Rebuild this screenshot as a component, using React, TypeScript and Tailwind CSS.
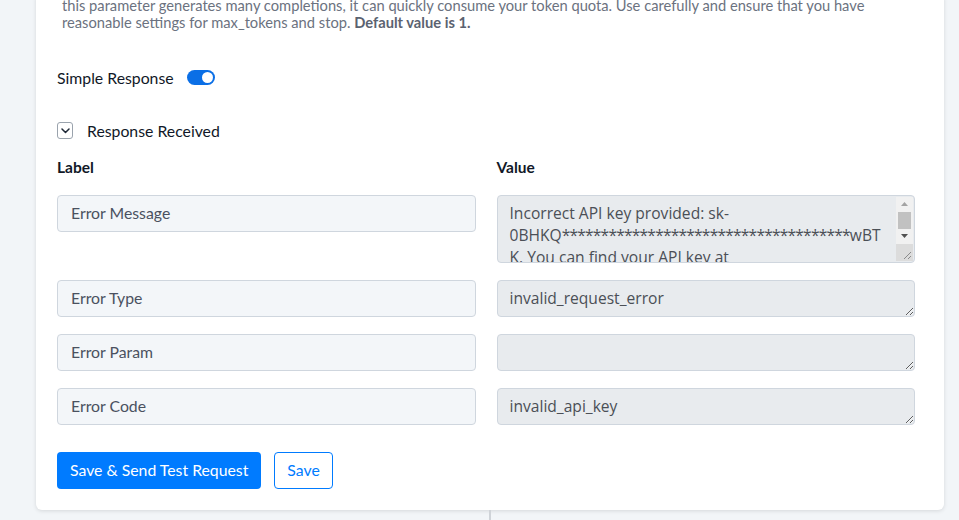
import React from "react";

const rows = [
  { label: "Error Message", value: "" },
  { label: "Error Type", value: "invalid_request_error" },
  { label: "Error Param", value: "" },
  { label: "Error Code", value: "invalid_api_key" },
];

const mask = "*".repeat(37);

function Toggle() {
  return (
    <span className="inline-flex h-[15px] w-[28px] items-center justify-end rounded-full bg-[#0b6fe6] px-[2px]">
      <span className="h-[11px] w-[11px] rounded-full bg-white" />
    </span>
  );
}

function Chevron() {
  return (
    <span className="flex h-[17px] w-[16px] items-center justify-center rounded-[3px] border border-[#9aa3ad] bg-white">
      <svg width="9" height="6" viewBox="0 0 9 6" fill="none">
        <path d="M1 1l3.5 3.5L8 1" stroke="#1f2937" strokeWidth="1.5" strokeLinecap="round" strokeLinejoin="round" />
      </svg>
    </span>
  );
}

// classic vertical scrollbar drawn over the right edge of the message box
function ScrollRail() {
  return (
    <div className="pointer-events-none absolute right-[1px] top-[1px] bottom-[1px] flex w-[17px] flex-col bg-[#f1f1f1]">
      <div className="flex h-[15px] items-center justify-center">
        <svg width="7" height="4" viewBox="0 0 7 4">
          <path d="M0 4L3.5 0L7 4z" fill="#a3a3a3" />
        </svg>
      </div>
      <div className="mx-[2px] h-[17px] bg-[#c1c1c1]" />
      <div className="flex h-[15px] items-center justify-center">
        <svg width="7" height="4" viewBox="0 0 7 4">
          <path d="M0 0L3.5 4L7 0z" fill="#505050" />
        </svg>
      </div>
      <div className="relative flex-1 bg-[#dcdcdc]">
        <svg className="absolute bottom-[1px] right-[1px]" width="9" height="9" viewBox="0 0 9 9">
          <path d="M8 1L1 8M8 5L5 8" stroke="#8a8a8a" strokeWidth="1" />
        </svg>
      </div>
    </div>
  );
}

function MessageBox() {
  return (
    <div className="relative h-[68px] overflow-hidden rounded-[4px] border border-[#cfd6de] bg-[#e8ebee]">
      <div className="pl-[12px] pr-[30px] pt-[6px] font-['Open_Sans',sans-serif] text-[15.6px] leading-[22px] text-[#4b4f56] whitespace-nowrap">
        <div>Incorrect API key provided: sk-</div>
        <div>
          0BHKQ<span className="tracking-[-0.8px]">{mask}</span>wBT
        </div>
        <div>K. You can find your API key at</div>
        <div>https://platform.openai.com/account/api-keys.</div>
      </div>
      <ScrollRail />
    </div>
  );
}

export default function App() {
  return (
    <div className="relative h-[520px] w-[959px] overflow-hidden bg-[#f2f5f8] font-['Lato',sans-serif]">
      <div className="ml-[36px] w-[908px] rounded-b-[6px] bg-white pb-[21px] pl-[21px] pr-[29px] shadow-[0_1px_4px_rgba(0,0,0,0.12)]">
        <p className="-mt-[3px] pl-[5px] text-[14.7px] leading-[17px] text-[#6b7280]">
          this parameter generates many completions, it can quickly consume your token quota. Use carefully and ensure that you have
          <br />
          reasonable settings for max_tokens and stop. <b className="font-bold text-[#5b6270]">Default value is 1.</b>
        </p>

        <div className="mt-[35px] flex items-center gap-[13px]">
          <span className="text-[15.8px] text-[#111827]">Simple Response</span>
          <Toggle />
        </div>

        <div className="mt-[29px] flex items-center gap-[14px]">
          <Chevron />
          <span className="text-[15.8px] text-[#111827]">Response Received</span>
        </div>

        <div className="mt-[14px] grid grid-cols-2 gap-x-[21px]">
          <div className="text-[15.5px] font-bold text-[#111827]">Label</div>
          <div className="text-[15.5px] font-bold text-[#111827]">Value</div>
        </div>

        <div className="mt-[15px] flex flex-col gap-[17px]">
          {rows.map((r, i) => (
            <div key={r.label} className="grid grid-cols-2 items-start gap-x-[21px]">
              <div className="flex h-[37px] items-center rounded-[4px] border border-[#cfd6de] bg-[#f3f6f9] px-[13px] text-[15.8px] text-[#4a5160]">
                {r.label}
              </div>
              {i === 0 ? (
                <MessageBox />
              ) : (
                <textarea
                  readOnly
                  value={r.value}
                  className="block h-[37px] w-full resize-y overflow-hidden rounded-[4px] border border-[#cfd6de] bg-[#e8ebee] px-[12px] pt-[6px] font-['Open_Sans',sans-serif] text-[15.6px] leading-[22px] text-[#4b4f56] outline-none"
                />
              )}
            </div>
          ))}
        </div>

        <div className="mt-[27px] flex items-center gap-[13px]">
          <button className="h-[37px] rounded-[4px] bg-[#007bff] px-[13px] text-[15.8px] text-white">
            Save &amp; Send Test Request
          </button>
          <button className="h-[37px] rounded-[4px] border border-[#007bff] bg-white px-[12px] text-[15.8px] text-[#007bff]">
            Save
          </button>
        </div>
      </div>
      <div className="ml-[489px] h-[20px] w-[2px] bg-[#cfd3d8]" />
    </div>
  );
}
